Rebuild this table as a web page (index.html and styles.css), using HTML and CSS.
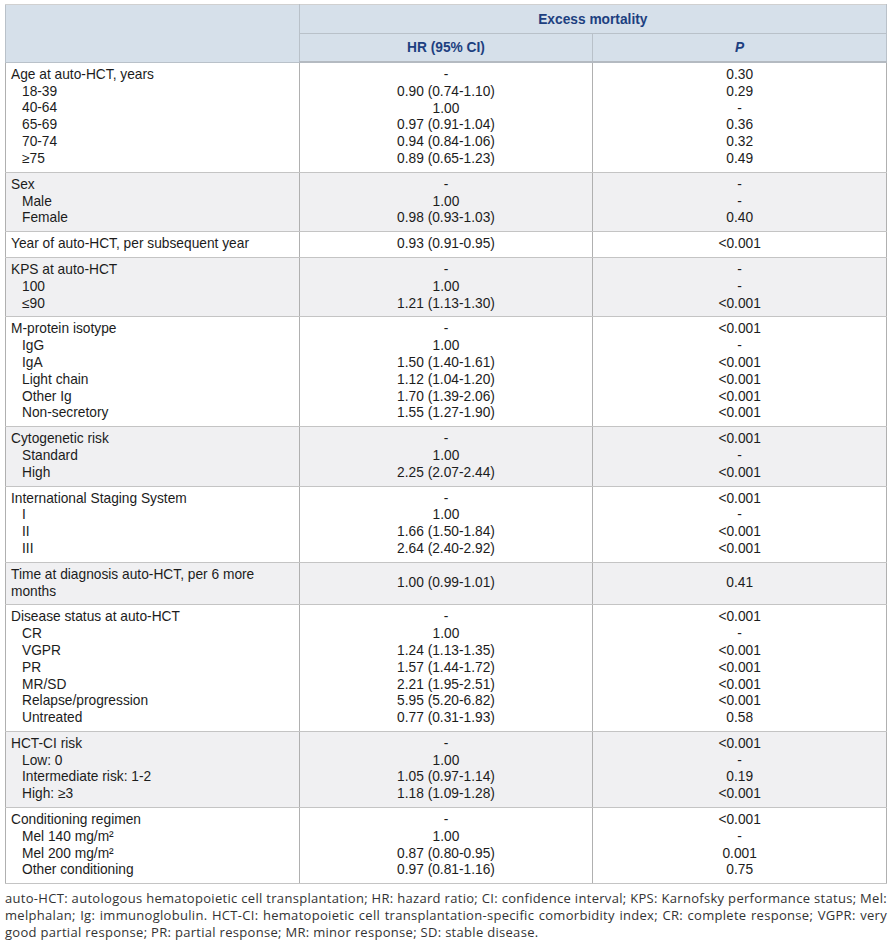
FILE: index.html
```html
<!DOCTYPE html>
<html lang="en">
<head>
<meta charset="utf-8">
<title>Excess mortality</title>
<link rel="stylesheet" href="styles.css">
</head>
<body>
<div class="page">
<table class="tbl">
  <thead>
    <tr class="h1">
      <th rowspan="2" class="blank"></th>
      <th colspan="2">Excess mortality</th>
    </tr>
    <tr class="h2">
      <th>HR (95% CI)</th>
      <th><i>P</i></th>
    </tr>
  </thead>
  <tbody>
    <tr class="w">
      <td><div>Age at auto-HCT, years</div><div class="sub">18-39</div><div class="sub">40-64</div><div class="sub">65-69</div><div class="sub">70-74</div><div class="sub">≥75</div></td>
      <td><div>-</div><div>0.90 (0.74-1.10)</div><div>1.00</div><div>0.97 (0.91-1.04)</div><div>0.94 (0.84-1.06)</div><div>0.89 (0.65-1.23)</div></td>
      <td><div>0.30</div><div>0.29</div><div>-</div><div>0.36</div><div>0.32</div><div>0.49</div></td>
    </tr>
    <tr class="g">
      <td><div>Sex</div><div class="sub">Male</div><div class="sub">Female</div></td>
      <td><div>-</div><div>1.00</div><div>0.98 (0.93-1.03)</div></td>
      <td><div>-</div><div>-</div><div>0.40</div></td>
    </tr>
    <tr class="w">
      <td><div>Year of auto-HCT, per subsequent year</div></td>
      <td><div>0.93 (0.91-0.95)</div></td>
      <td><div>&lt;0.001</div></td>
    </tr>
    <tr class="g">
      <td><div>KPS at auto-HCT</div><div class="sub">100</div><div class="sub">≤90</div></td>
      <td><div>-</div><div>1.00</div><div>1.21 (1.13-1.30)</div></td>
      <td><div>-</div><div>-</div><div>&lt;0.001</div></td>
    </tr>
    <tr class="w">
      <td><div>M-protein isotype</div><div class="sub">IgG</div><div class="sub">IgA</div><div class="sub">Light chain</div><div class="sub">Other Ig</div><div class="sub">Non-secretory</div></td>
      <td><div>-</div><div>1.00</div><div>1.50 (1.40-1.61)</div><div>1.12 (1.04-1.20)</div><div>1.70 (1.39-2.06)</div><div>1.55 (1.27-1.90)</div></td>
      <td><div>&lt;0.001</div><div>-</div><div>&lt;0.001</div><div>&lt;0.001</div><div>&lt;0.001</div><div>&lt;0.001</div></td>
    </tr>
    <tr class="g">
      <td><div>Cytogenetic risk</div><div class="sub">Standard</div><div class="sub">High</div></td>
      <td><div>-</div><div>1.00</div><div>2.25 (2.07-2.44)</div></td>
      <td><div>&lt;0.001</div><div>-</div><div>&lt;0.001</div></td>
    </tr>
    <tr class="w">
      <td><div>International Staging System</div><div class="sub">I</div><div class="sub">II</div><div class="sub">III</div></td>
      <td><div>-</div><div>1.00</div><div>1.66 (1.50-1.84)</div><div>2.64 (2.40-2.92)</div></td>
      <td><div>&lt;0.001</div><div>-</div><div>&lt;0.001</div><div>&lt;0.001</div></td>
    </tr>
    <tr class="g">
      <td><div>Time at diagnosis auto-HCT, per 6 more months</div></td>
      <td><div>1.00 (0.99-1.01)</div></td>
      <td><div>0.41</div></td>
    </tr>
    <tr class="w">
      <td><div>Disease status at auto-HCT</div><div class="sub">CR</div><div class="sub">VGPR</div><div class="sub">PR</div><div class="sub">MR/SD</div><div class="sub">Relapse/progression</div><div class="sub">Untreated</div></td>
      <td><div>-</div><div>1.00</div><div>1.24 (1.13-1.35)</div><div>1.57 (1.44-1.72)</div><div>2.21 (1.95-2.51)</div><div>5.95 (5.20-6.82)</div><div>0.77 (0.31-1.93)</div></td>
      <td><div>&lt;0.001</div><div>-</div><div>&lt;0.001</div><div>&lt;0.001</div><div>&lt;0.001</div><div>&lt;0.001</div><div>0.58</div></td>
    </tr>
    <tr class="g">
      <td><div>HCT-CI risk</div><div class="sub">Low: 0</div><div class="sub">Intermediate risk: 1-2</div><div class="sub">High: ≥3</div></td>
      <td><div>-</div><div>1.00</div><div>1.05 (0.97-1.14)</div><div>1.18 (1.09-1.28)</div></td>
      <td><div>&lt;0.001</div><div>-</div><div>0.19</div><div>&lt;0.001</div></td>
    </tr>
    <tr class="w">
      <td><div>Conditioning regimen</div><div class="sub">Mel 140 mg/m²</div><div class="sub">Mel 200 mg/m²</div><div class="sub">Other conditioning</div></td>
      <td><div>-</div><div>1.00</div><div>0.87 (0.80-0.95)</div><div>0.97 (0.81-1.16)</div></td>
      <td><div>&lt;0.001</div><div>-</div><div>0.001</div><div>0.75</div></td>
    </tr>
  </tbody>
</table>
<p class="note">auto-HCT: autologous hematopoietic cell transplantation; HR: hazard ratio; CI: confidence interval; KPS: Karnofsky performance status; Mel: melphalan; Ig: immunoglobulin. HCT-CI: hematopoietic cell transplantation-specific comorbidity index; CR: complete response; VGPR: very good partial response; PR: partial response; MR: minor response; SD: stable disease.</p>
</div>
</body>
</html>
```

FILE: styles.css
```css
html, body {
  margin: 0;
  padding: 0;
  background: #ffffff;
}
.page {
  padding: 4px 5px 0 5px;
}
.tbl {
  width: 100%;
  border-collapse: collapse;
  table-layout: fixed;
  font-family: "Liberation Sans", Arial, sans-serif;
  font-size: 13.75px;
  color: #1c1c1c;
}
.tbl th {
  background: #d6e0ea;
  color: #1d3f80;
  font-weight: bold;
  font-size: 13.75px;
  text-align: center;
  border: 1px solid #b9c1c9;
  padding: 0 4px;
}
.tbl .h1 th {
  height: 28px;
  border-top-color: #d0d0d0;
}
.tbl .h2 th {
  height: 27px;
  border-bottom: 2px solid #b4bac1;
}
.tbl td {
  border: 1px solid #c4c4c4;
  border-left-color: #b0b0b0;
  border-right-color: #b0b0b0;
  padding: 4px 5px;
  line-height: 16.8px;
  vertical-align: middle;
  text-align: center;
}
.tbl td:first-child {
  text-align: left;
}
.tbl .sub {
  padding-left: 11px;
}
.tbl tr.g td {
  background: #f0f0f2;
}
.tbl tr.w td {
  background: #ffffff;
}
.note {
  margin: 6px 0 0 0;
  font-family: "Open Sans", sans-serif;
  font-size: 13px;
  letter-spacing: 0.3px;
  line-height: 17px;
  text-align: justify;
  color: #333;
}
```
